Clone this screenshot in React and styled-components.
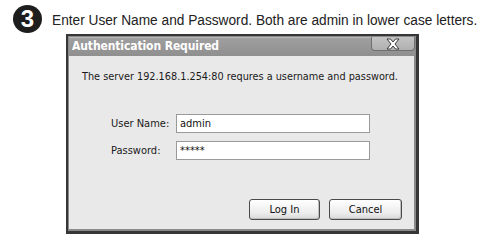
import React from "react";
import styled, { createGlobalStyle } from "styled-components";

const GlobalStyle = createGlobalStyle`
  body {
    margin: 0;
    background: #ffffff;
  }
`;

function App() {
  return (
    <Page>
      <GlobalStyle />
      <Step>
        <StepBadge>3</StepBadge>
        <StepText>Enter User Name and Password. Both are admin in lower case letters.</StepText>
      </Step>

      <Dialog>
        <TitleBar>
          <Title>Authentication Required</Title>
          <CloseButton aria-label="close">
            <svg width="16" height="12" viewBox="0 0 16 12">
              <path
                d="M2 1 H5.5 L8 4 L10.5 1 H14 L10 6 L14 11 H10.5 L8 8 L5.5 11 H2 L6 6 Z"
                fill="#ffffff"
                stroke="#3a3a3a"
                strokeWidth="1"
                strokeLinejoin="round"
              />
            </svg>
          </CloseButton>
        </TitleBar>

        <Body>
          <Message>The server 192.168.1.254:80 requres a username and password.</Message>

          <Form>
            <Label>User Name:</Label>
            <Field defaultValue="admin" />
            <Label>Password:</Label>
            <Field defaultValue="*****" />
          </Form>

          <Buttons>
            <Button $wide={71}>Log In</Button>
            <Button $wide={73}>Cancel</Button>
          </Buttons>
        </Body>
      </Dialog>
    </Page>
  );
}

export default App;

const Page = styled.div`
  width: 493px;
  height: 247px;
  padding-top: 5px;
  box-sizing: border-box;
  font-family: "Liberation Sans", Arial, sans-serif;
`;

const Step = styled.div`
  display: flex;
  align-items: center;
  padding-left: 13px;
  height: 28px;
`;

const StepBadge = styled.div`
  width: 29px;
  height: 28px;
  border-radius: 50%;
  background: #1e1e1e;
  color: #ffffff;
  font-family: "Liberation Sans", Arial, sans-serif;
  font-weight: 700;
  font-size: 24px;
  line-height: 28px;
  text-align: center;
  flex-shrink: 0;
`;

const StepText = styled.div`
  margin-left: 10px;
  margin-top: 3px;
  font-size: 13.7px;
  color: #222222;
  white-space: nowrap;
  transform: scaleY(1.1);
`;

const Dialog = styled.div`
  margin: 1px 0 0 66px;
  width: 353px;
  height: 200px;
  box-sizing: border-box;
  border: 2px solid #363636;
  border-bottom-width: 3px;
  border-right-width: 3px;
  box-shadow: inset 1px 1px 0 #8a8a8a, inset -2px -2px 0 #8a8a8a;
  background: #e9e9e9;
  display: flex;
  flex-direction: column;
  font-family: "DejaVu Sans Condensed", "DejaVu Sans", sans-serif;
`;

const TitleBar = styled.div`
  height: 19px;
  margin: 1px 1px 0 1px;
  background: linear-gradient(#a0a0a0, #8f8f8f);
  box-shadow: inset 0 1px 0 #b8b8b8;
  display: flex;
  align-items: flex-start;
  justify-content: space-between;
`;

const Title = styled.div`
  color: #ffffff;
  font-weight: 700;
  font-size: 12px;
  line-height: 19px;
  padding-left: 3px;
  letter-spacing: -0.1px;
`;

const CloseButton = styled.div`
  width: 44px;
  height: 14px;
  box-sizing: border-box;
  border: 1px solid #707070;
  border-top: none;
  border-radius: 0 0 4px 4px;
  background: linear-gradient(#c4c4c4, #b0b0b0);
  display: flex;
  align-items: center;
  justify-content: center;
`;

const Body = styled.div`
  flex: 1;
  display: flex;
  flex-direction: column;
  padding: 0 14px 0 14px;
`;

const Message = styled.div`
  margin-top: 14px;
  font-size: 10.8px;
  color: #1a1a1a;
  white-space: nowrap;
`;

const Form = styled.div`
  display: grid;
  grid-template-columns: 64px 194px;
  grid-auto-rows: 19px;
  column-gap: 1px;
  row-gap: 8px;
  align-items: center;
  margin: 31px 0 0 29px;
`;

const Label = styled.div`
  font-size: 11px;
  color: #1a1a1a;
`;

const Field = styled.input`
  height: 19px;
  box-sizing: border-box;
  border: 1px solid #9a9a9a;
  background: #ffffff;
  font-family: "DejaVu Sans Condensed", "DejaVu Sans", sans-serif;
  font-size: 11px;
  padding: 0 3px;
  color: #111111;
  outline: none;
`;

const Buttons = styled.div`
  display: flex;
  justify-content: flex-end;
  gap: 9px;
  margin-top: auto;
  margin-bottom: 11px;
`;

const Button = styled.button`
  width: ${(p) => p.$wide}px;
  height: 21px;
  box-sizing: border-box;
  border: 1px solid #4a4a4a;
  border-radius: 3px;
  background: linear-gradient(#ffffff, #ececec 70%, #d8d8d8);
  box-shadow: inset -1px -1px 0 #c0c0c0;
  font-family: "DejaVu Sans Condensed", "DejaVu Sans", sans-serif;
  font-size: 11px;
  color: #111111;
  padding: 0;
`;
